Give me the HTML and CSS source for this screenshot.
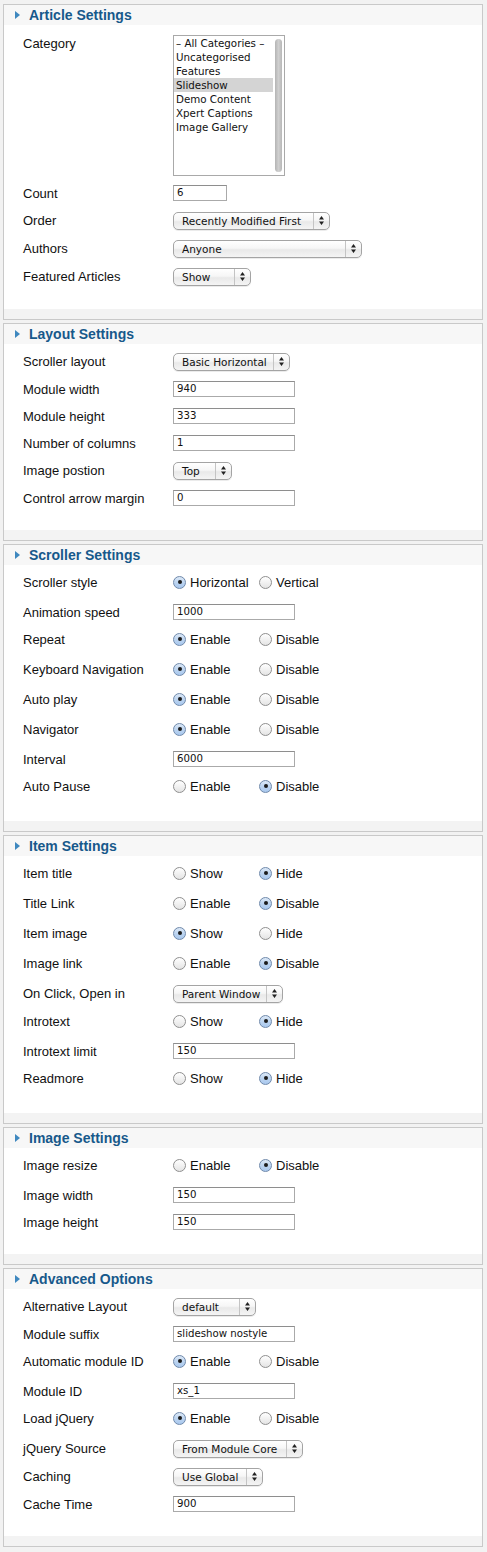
FILE: index.html
```html
<!DOCTYPE html>
<html>
<head>
<meta charset="utf-8">
<title>Module Settings</title>
<link rel="stylesheet" href="styles.css">
</head>
<body>
<div class="page">

  <section class="panel">
    <h3 class="panel-title"><span class="toggler"></span>Article Settings</h3>
    <div class="panel-body">
      <div class="row row-list">
        <span class="label label-list">Category</span>
        <div class="listbox">
          <ul class="list-items">
            <li>– All Categories –</li>
            <li>Uncategorised</li>
            <li>Features</li>
            <li class="selected">Slideshow</li>
            <li>Demo Content</li>
            <li>Xpert Captions</li>
            <li>Image Gallery</li>
          </ul>
          <div class="scroll-track"><div class="scroll-thumb"></div></div>
        </div>
      </div>
      <div class="row row-input"><span class="label">Count</span><span class="text w-54">6</span></div>
      <div class="row row-select"><span class="label">Order</span><span class="select w-157"><span class="select-value">Recently Modified First</span><span class="select-arrows"><svg width="5" height="9" viewBox="0 0 5 9"><path d="M2.5 0 L5 3.5 H0 Z M2.5 9 L5 5.5 H0 Z" fill="#222"/></svg></span></span></div>
      <div class="row row-select"><span class="label">Authors</span><span class="select w-189"><span class="select-value">Anyone</span><span class="select-arrows"><svg width="5" height="9" viewBox="0 0 5 9"><path d="M2.5 0 L5 3.5 H0 Z M2.5 9 L5 5.5 H0 Z" fill="#222"/></svg></span></span></div>
      <div class="row row-select"><span class="label">Featured Articles</span><span class="select w-78"><span class="select-value">Show</span><span class="select-arrows"><svg width="5" height="9" viewBox="0 0 5 9"><path d="M2.5 0 L5 3.5 H0 Z M2.5 9 L5 5.5 H0 Z" fill="#222"/></svg></span></span></div>
    </div>
    <div class="panel-foot"></div>
  </section>

  <section class="panel">
    <h3 class="panel-title"><span class="toggler"></span>Layout Settings</h3>
    <div class="panel-body">
      <div class="row row-select"><span class="label">Scroller layout</span><span class="select w-117"><span class="select-value">Basic Horizontal</span><span class="select-arrows"><svg width="5" height="9" viewBox="0 0 5 9"><path d="M2.5 0 L5 3.5 H0 Z M2.5 9 L5 5.5 H0 Z" fill="#222"/></svg></span></span></div>
      <div class="row row-input"><span class="label">Module width</span><span class="text w-122">940</span></div>
      <div class="row row-input"><span class="label">Module height</span><span class="text w-122">333</span></div>
      <div class="row row-input"><span class="label">Number of columns</span><span class="text w-122">1</span></div>
      <div class="row row-select"><span class="label">Image postion</span><span class="select w-59"><span class="select-value">Top</span><span class="select-arrows"><svg width="5" height="9" viewBox="0 0 5 9"><path d="M2.5 0 L5 3.5 H0 Z M2.5 9 L5 5.5 H0 Z" fill="#222"/></svg></span></span></div>
      <div class="row row-input"><span class="label">Control arrow margin</span><span class="text w-122">0</span></div>
    </div>
    <div class="panel-foot"></div>
  </section>

  <section class="panel">
    <h3 class="panel-title"><span class="toggler"></span>Scroller Settings</h3>
    <div class="panel-body">
      <div class="row row-radio"><span class="label">Scroller style</span><span class="radios"><span class="opt"><span class="radio on"></span>Horizontal</span><span class="opt"><span class="radio"></span>Vertical</span></span></div>
      <div class="row row-input"><span class="label">Animation speed</span><span class="text w-122">1000</span></div>
      <div class="row row-radio"><span class="label">Repeat</span><span class="radios"><span class="opt"><span class="radio on"></span>Enable</span><span class="opt"><span class="radio"></span>Disable</span></span></div>
      <div class="row row-radio"><span class="label">Keyboard Navigation</span><span class="radios"><span class="opt"><span class="radio on"></span>Enable</span><span class="opt"><span class="radio"></span>Disable</span></span></div>
      <div class="row row-radio"><span class="label">Auto play</span><span class="radios"><span class="opt"><span class="radio on"></span>Enable</span><span class="opt"><span class="radio"></span>Disable</span></span></div>
      <div class="row row-radio"><span class="label">Navigator</span><span class="radios"><span class="opt"><span class="radio on"></span>Enable</span><span class="opt"><span class="radio"></span>Disable</span></span></div>
      <div class="row row-input"><span class="label">Interval</span><span class="text w-122">6000</span></div>
      <div class="row row-radio"><span class="label">Auto Pause</span><span class="radios"><span class="opt"><span class="radio"></span>Enable</span><span class="opt"><span class="radio on"></span>Disable</span></span></div>
    </div>
    <div class="panel-foot"></div>
  </section>

  <section class="panel">
    <h3 class="panel-title"><span class="toggler"></span>Item Settings</h3>
    <div class="panel-body">
      <div class="row row-radio"><span class="label">Item title</span><span class="radios"><span class="opt"><span class="radio"></span>Show</span><span class="opt"><span class="radio on"></span>Hide</span></span></div>
      <div class="row row-radio"><span class="label">Title Link</span><span class="radios"><span class="opt"><span class="radio"></span>Enable</span><span class="opt"><span class="radio on"></span>Disable</span></span></div>
      <div class="row row-radio"><span class="label">Item image</span><span class="radios"><span class="opt"><span class="radio on"></span>Show</span><span class="opt"><span class="radio"></span>Hide</span></span></div>
      <div class="row row-radio"><span class="label">Image link</span><span class="radios"><span class="opt"><span class="radio"></span>Enable</span><span class="opt"><span class="radio on"></span>Disable</span></span></div>
      <div class="row row-select"><span class="label">On Click, Open in</span><span class="select w-110"><span class="select-value">Parent Window</span><span class="select-arrows"><svg width="5" height="9" viewBox="0 0 5 9"><path d="M2.5 0 L5 3.5 H0 Z M2.5 9 L5 5.5 H0 Z" fill="#222"/></svg></span></span></div>
      <div class="row row-radio"><span class="label">Introtext</span><span class="radios"><span class="opt"><span class="radio"></span>Show</span><span class="opt"><span class="radio on"></span>Hide</span></span></div>
      <div class="row row-input"><span class="label">Introtext limit</span><span class="text w-122">150</span></div>
      <div class="row row-radio"><span class="label">Readmore</span><span class="radios"><span class="opt"><span class="radio"></span>Show</span><span class="opt"><span class="radio on"></span>Hide</span></span></div>
    </div>
    <div class="panel-foot"></div>
  </section>

  <section class="panel">
    <h3 class="panel-title"><span class="toggler"></span>Image Settings</h3>
    <div class="panel-body">
      <div class="row row-radio"><span class="label">Image resize</span><span class="radios"><span class="opt"><span class="radio"></span>Enable</span><span class="opt"><span class="radio on"></span>Disable</span></span></div>
      <div class="row row-input"><span class="label">Image width</span><span class="text w-122">150</span></div>
      <div class="row row-input"><span class="label">Image height</span><span class="text w-122">150</span></div>
    </div>
    <div class="panel-foot"></div>
  </section>

  <section class="panel">
    <h3 class="panel-title"><span class="toggler"></span>Advanced Options</h3>
    <div class="panel-body">
      <div class="row row-select"><span class="label">Alternative Layout</span><span class="select w-83"><span class="select-value">default</span><span class="select-arrows"><svg width="5" height="9" viewBox="0 0 5 9"><path d="M2.5 0 L5 3.5 H0 Z M2.5 9 L5 5.5 H0 Z" fill="#222"/></svg></span></span></div>
      <div class="row row-input"><span class="label">Module suffix</span><span class="text w-122">slideshow nostyle</span></div>
      <div class="row row-radio"><span class="label">Automatic module ID</span><span class="radios"><span class="opt"><span class="radio on"></span>Enable</span><span class="opt"><span class="radio"></span>Disable</span></span></div>
      <div class="row row-input"><span class="label">Module ID</span><span class="text w-122">xs_1</span></div>
      <div class="row row-radio"><span class="label">Load jQuery</span><span class="radios"><span class="opt"><span class="radio on"></span>Enable</span><span class="opt"><span class="radio"></span>Disable</span></span></div>
      <div class="row row-select"><span class="label">jQuery Source</span><span class="select w-130"><span class="select-value">From Module Core</span><span class="select-arrows"><svg width="5" height="9" viewBox="0 0 5 9"><path d="M2.5 0 L5 3.5 H0 Z M2.5 9 L5 5.5 H0 Z" fill="#222"/></svg></span></span></div>
      <div class="row row-select"><span class="label">Caching</span><span class="select w-90"><span class="select-value">Use Global</span><span class="select-arrows"><svg width="5" height="9" viewBox="0 0 5 9"><path d="M2.5 0 L5 3.5 H0 Z M2.5 9 L5 5.5 H0 Z" fill="#222"/></svg></span></span></div>
      <div class="row row-input"><span class="label">Cache Time</span><span class="text w-122">900</span></div>
    </div>
    <div class="panel-foot"></div>
  </section>

</div>
</body>
</html>
```

FILE: styles.css
```css
* { box-sizing: border-box; }

html, body {
  margin: 0;
  padding: 0;
  background: #f2f2f2;
}

body {
  font-family: "Liberation Sans", Arial, sans-serif;
  font-size: 13px;
  color: #111;
}

.page {
  padding: 4px 4px 0 3px;
}

.panel {
  border: 1px solid #c9c9c9;
  background: #fff;
  margin-bottom: 3px;
}

.panel-title {
  margin: 0;
  height: 20px;
  line-height: 20px;
  background: #f7f7f7;
  color: #17598b;
  font-size: 14px;
  font-weight: bold;
  display: flex;
  align-items: center;
}

.toggler {
  width: 0;
  height: 0;
  border-left: 5px solid #3f88bf;
  border-top: 4.5px solid transparent;
  border-bottom: 4.5px solid transparent;
  margin-left: 11px;
  margin-right: 9px;
}

.panel-body {
  padding: 3px 0 19px 19px;
}

.panel-foot {
  height: 10px;
  background: #f3f3f3;
}

.row {
  display: flex;
  align-items: center;
}

.row-input { height: 27px; padding-top: 1px; }
.row-select { height: 28px; padding-top: 1px; }
.row-radio { height: 30px; padding-top: 1px; padding-bottom: 3px; }
.row-list { align-items: flex-start; padding: 7px 0 3px; }

.label {
  width: 150px;
  flex: none;
  line-height: 15px;
}

.label-list { padding-top: 1px; }

/* list box */
.listbox {
  width: 112px;
  height: 141px;
  border: 1px solid #a9a9a9;
  background: #fff;
  display: flex;
  font-family: "DejaVu Sans", sans-serif;
  font-size: 10.3px;
  color: #111;
}

.list-items {
  list-style: none;
  margin: 0;
  padding: 0;
  flex: 1;
}

.list-items li {
  height: 14px;
  line-height: 14px;
  padding-left: 2px;
  white-space: nowrap;
}

.list-items li.selected {
  background: #d4d4d4;
}

.scroll-track {
  width: 11px;
  flex: none;
  padding: 3px 0 3px 2px;
}

.scroll-thumb {
  width: 7px;
  height: 133px;
  border-radius: 4px;
  background: linear-gradient(to right, #b4b4b4, #cfcfcf 50%, #b8b8b8);
}

/* text inputs */
.text {
  display: block;
  height: 16px;
  line-height: 14px;
  border: 1px solid #aaa;
  border-top-color: #8e8e8e;
  background: #fff;
  padding-left: 3px;
  font-family: "DejaVu Sans", sans-serif;
  font-size: 10.2px;
  color: #111;
  white-space: nowrap;
  overflow: hidden;
}

.w-54 { width: 54px; }
.w-122 { width: 122px; }

/* selects */
.select {
  display: flex;
  height: 18px;
  border: 1px solid #a4a4a4;
  border-radius: 5px;
  background: linear-gradient(to bottom, #ffffff 0%, #f6f6f6 45%, #e9e9e9 55%, #f4f4f4 100%);
  box-shadow: 0 1px 0 rgba(0, 0, 0, 0.08);
  font-family: "DejaVu Sans", sans-serif;
  font-size: 10.5px;
  color: #111;
}

.select-value {
  flex: 1;
  line-height: 16px;
  padding-left: 8px;
  white-space: nowrap;
  overflow: hidden;
}

.select-arrows {
  width: 16px;
  flex: none;
  border-left: 1px solid #c4c4c4;
  display: flex;
  align-items: center;
  justify-content: center;
}

.w-59 { width: 59px; }
.w-78 { width: 78px; }
.w-83 { width: 83px; }
.w-90 { width: 90px; }
.w-110 { width: 110px; }
.w-117 { width: 117px; }
.w-130 { width: 130px; }
.w-157 { width: 157px; }
.w-189 { width: 189px; }

/* radios */
.radios {
  display: flex;
  align-items: center;
}

.opt {
  display: flex;
  align-items: center;
  width: 86px;
  line-height: 15px;
}

.radio {
  width: 13px;
  height: 13px;
  flex: none;
  border-radius: 50%;
  border: 1px solid #8f8f8f;
  background: linear-gradient(to bottom, #ffffff, #e4e4e4);
  margin-right: 4px;
  display: flex;
  align-items: center;
  justify-content: center;
}

.radio.on {
  border-color: #6f89ab;
  background: linear-gradient(to bottom, #dde9f7 0%, #bcd4f0 50%, #a9c8ee 100%);
}

.radio.on::after {
  content: "";
  width: 4px;
  height: 4px;
  border-radius: 50%;
  background: #1c1c1c;
}
```
